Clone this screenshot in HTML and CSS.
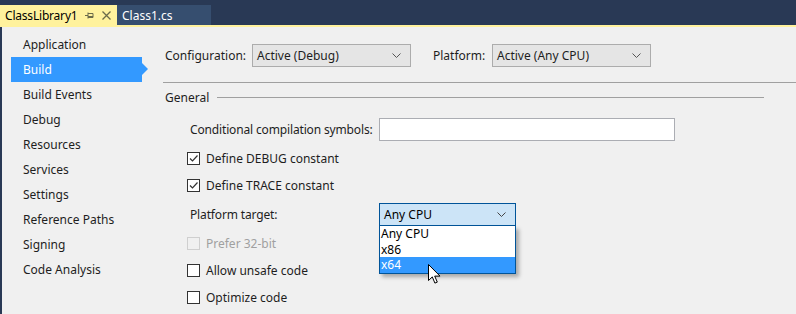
FILE: index.html
```html
<!DOCTYPE html>
<html lang="en">
<head>
    <meta charset="UTF-8">
    <title>ClassLibrary1 - Build</title>
    <link rel="stylesheet" href="styles.css">
</head>
<body>
    <div class="tabs">
        <div class="tab active">
            <span class="tab-name">ClassLibrary1</span>
            <svg class="pin" width="9" height="9" viewBox="0 0 9 9"><path d="M0 4.5h3M3 1.5v6M3 2.5h5v4H3M3 5.5h5" fill="none" stroke="#6b6b4a" stroke-width="1"/></svg>
            <svg class="close" width="9" height="9" viewBox="0 0 9 9"><path d="M0.5 0.5l8 8M8.5 0.5l-8 8" stroke="#6b6b4a" stroke-width="1.3"/></svg>
        </div>
        <div class="tab">Class1.cs</div>
    </div>

    <div class="page">
        <ul class="nav">
            <li>Application</li>
            <li class="selected">Build</li>
            <li>Build Events</li>
            <li>Debug</li>
            <li>Resources</li>
            <li>Services</li>
            <li>Settings</li>
            <li>Reference Paths</li>
            <li>Signing</li>
            <li>Code Analysis</li>
        </ul>

        <div class="main">
            <div class="config-row">
                <span class="cfg-label">Configuration:</span>
                <div class="combo cfg-combo">
                    <span>Active (Debug)</span>
                    <svg class="chev" width="9" height="5" viewBox="0 0 9 5"><path d="M0.5 0.5l4 4 4-4" fill="none" stroke="#555" stroke-width="1"/></svg>
                </div>
                <span class="plat-label">Platform:</span>
                <div class="combo cfg-combo">
                    <span>Active (Any CPU)</span>
                    <svg class="chev" width="9" height="5" viewBox="0 0 9 5"><path d="M0.5 0.5l4 4 4-4" fill="none" stroke="#555" stroke-width="1"/></svg>
                </div>
            </div>

            <div class="separator"></div>

            <div class="group-title">
                <span>General</span>
                <div class="group-line"></div>
            </div>

            <div class="general">
                <div class="field">
                    <span class="field-label">Conditional compilation symbols:</span>
                    <div class="textbox"></div>
                </div>
                <div class="check-row">
                    <span class="checkbox checked"><svg width="11" height="11" viewBox="0 0 11 11"><path d="M2 5.5l2.5 2.5 5-5.5" fill="none" stroke="#333" stroke-width="1.2"/></svg></span>
                    <span>Define DEBUG constant</span>
                </div>
                <div class="check-row">
                    <span class="checkbox checked"><svg width="11" height="11" viewBox="0 0 11 11"><path d="M2 5.5l2.5 2.5 5-5.5" fill="none" stroke="#333" stroke-width="1.2"/></svg></span>
                    <span>Define TRACE constant</span>
                </div>
                <div class="field target">
                    <span class="field-label">Platform target:</span>
                    <div class="dropdown">
                        <div class="combo open-combo">
                            <span>Any CPU</span>
                            <svg class="chev" width="9" height="5" viewBox="0 0 9 5"><path d="M0.5 0.5l4 4 4-4" fill="none" stroke="#444" stroke-width="1"/></svg>
                        </div>
                        <ul class="options">
                            <li>Any CPU</li>
                            <li>x86</li>
                            <li class="hover">x64</li>
                        </ul>
                        <svg class="cursor" width="14" height="21" viewBox="0 0 14 21"><path d="M0.5 0.5v16l3.8-3.6 2.6 6.2 2.4-1-2.6-6h5.3z" fill="#fff" stroke="#000" stroke-width="1"/></svg>
                    </div>
                </div>
                <div class="check-row disabled">
                    <span class="checkbox"></span>
                    <span>Prefer 32-bit</span>
                </div>
                <div class="check-row">
                    <span class="checkbox"></span>
                    <span>Allow unsafe code</span>
                </div>
                <div class="check-row">
                    <span class="checkbox"></span>
                    <span>Optimize code</span>
                </div>
            </div>
        </div>
    </div>
</body>
</html>
```

FILE: styles.css
```css
body {
    margin: 0;
    font-family: "Segoe UI", "Noto Sans", sans-serif;
    font-size: 12px;
    color: #1e1e1e;
    background-color: #f0f0f0;
    width: 796px;
    height: 314px;
    overflow: hidden;
    white-space: nowrap;
}
.tabs {
    display: flex;
    height: 20px;
    padding-top: 5px;
    background-color: #293955;
    border-bottom: 2px solid #fff29d;
}
.tab {
    display: flex;
    align-items: center;
    width: 94px;
    padding-left: 5px;
    box-sizing: border-box;
    background-color: #364e6f;
    color: #fff;
}
.tab.active {
    width: 117px;
    background-color: #fff29d;
    color: #000;
}
.tab-name {
    letter-spacing: -0.2px;
}
.pin {
    margin-left: 8px;
}
.close {
    margin-left: 8px;
}
.page {
    display: flex;
    height: 287px;
    border-left: 2px solid #293955;
}
.nav {
    list-style: none;
    margin: 0;
    padding: 5px 0 0 9px;
    width: 161px;
    flex-shrink: 0;
    box-sizing: border-box;
}
.nav li {
    position: relative;
    height: 25px;
    line-height: 25px;
    width: 131px;
    padding-left: 12px;
    box-sizing: border-box;
}
.nav li.selected {
    background-color: #3399ff;
    color: #fff;
}
.nav li.selected::after {
    content: "";
    position: absolute;
    right: -6px;
    top: 6px;
    border-top: 6px solid transparent;
    border-bottom: 6px solid transparent;
    border-left: 6px solid #3399ff;
}
.main {
    flex: 1;
}
.config-row {
    display: flex;
    align-items: center;
    margin-top: 17px;
    padding-left: 2px;
}
.cfg-label {
    width: 87px;
}
.plat-label {
    width: 59px;
    margin-left: 22px;
}
.combo {
    display: flex;
    align-items: center;
    justify-content: space-between;
    height: 23px;
    padding: 0 9px 0 4px;
    box-sizing: border-box;
    background-color: #e5e5e5;
    border: 1px solid #acacac;
}
.cfg-combo {
    width: 159px;
}
.separator {
    margin-top: 15px;
    height: 1px;
    background-color: #a0a0a0;
}
.group-title {
    display: flex;
    align-items: center;
    height: 28px;
    padding-left: 2px;
}
.group-line {
    width: 547px;
    height: 1px;
    margin-left: 8px;
    background-color: #a0a0a0;
}
.general {
    margin-top: 7px;
    padding-left: 24px;
}
.field {
    display: flex;
    align-items: center;
    height: 23px;
}
.field-label {
    width: 192px;
    padding-left: 3px;
    box-sizing: border-box;
    letter-spacing: -0.15px;
}
.textbox {
    width: 296px;
    height: 23px;
    box-sizing: border-box;
    background-color: #fff;
    border: 1px solid #abadb3;
}
.check-row {
    display: flex;
    align-items: center;
    height: 27px;
}
.field + .check-row {
    margin-top: 4px;
}
.field.target {
    margin-top: 4px;
    margin-bottom: 3px;
}
.checkbox {
    display: flex;
    align-items: center;
    justify-content: center;
    width: 13px;
    height: 13px;
    margin-right: 6px;
    box-sizing: border-box;
    background-color: #fff;
    border: 1px solid #333;
}
.check-row.disabled {
    color: #a0a0a0;
}
.check-row.disabled .checkbox {
    background-color: #f0f0f0;
    border-color: #cfcfcf;
}
.dropdown {
    position: relative;
    width: 137px;
}
.open-combo {
    width: 137px;
    background-color: #cce4f7;
    border-color: #005499;
    color: #000;
}
.options {
    position: absolute;
    left: 0;
    top: 23px;
    width: 137px;
    margin: 0;
    padding: 0;
    list-style: none;
    box-sizing: border-box;
    background-color: #fff;
    border: 1px solid #005499;
    border-top: none;
    box-shadow: 3px 3px 4px rgba(0, 0, 0, 0.3);
    color: #000;
    z-index: 2;
}
.options li {
    height: 15.5px;
    line-height: 15px;
    padding-left: 1px;
}
.options li.hover {
    background-color: #3399ff;
    color: #fff;
}
.cursor {
    position: absolute;
    left: 49px;
    top: 61px;
    z-index: 3;
}
```
